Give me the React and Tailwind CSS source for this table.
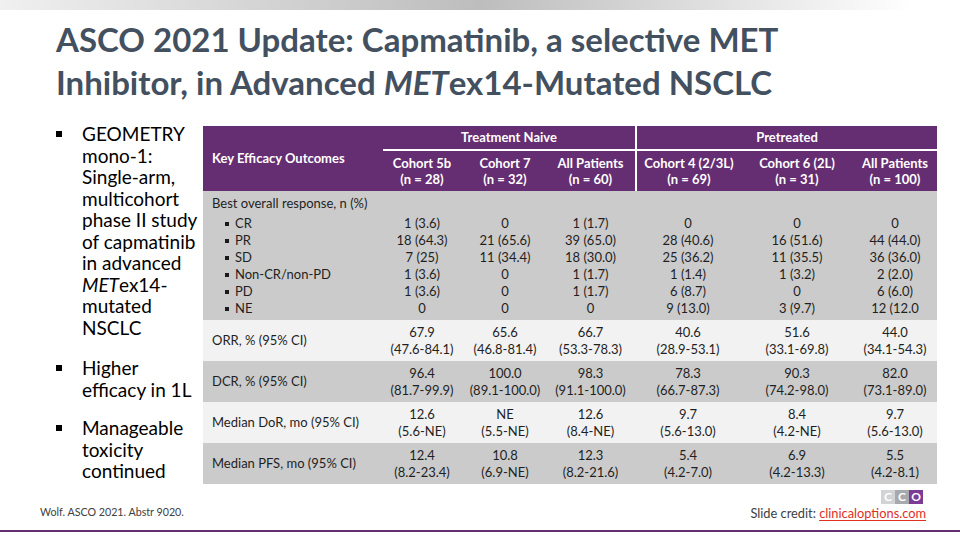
const W = ['w-[177px]', 'w-[84px]', 'w-[82px]', 'w-[89px]', 'w-[106px]', 'w-[112px]', 'w-[84px]'];

const bor = [
  ['CR', '1 (3.6)', '0', '1 (1.7)', '0', '0', '0'],
  ['PR', '18 (64.3)', '21 (65.6)', '39 (65.0)', '28 (40.6)', '16 (51.6)', '44 (44.0)'],
  ['SD', '7 (25)', '11 (34.4)', '18 (30.0)', '25 (36.2)', '11 (35.5)', '36 (36.0)'],
  ['Non-CR/non-PD', '1 (3.6)', '0', '1 (1.7)', '1 (1.4)', '1 (3.2)', '2 (2.0)'],
  ['PD', '1 (3.6)', '0', '1 (1.7)', '6 (8.7)', '0', '6 (6.0)'],
  ['NE', '0', '0', '0', '9 (13.0)', '3 (9.7)', '12 (12.0'],
];

const stats = [
  {
    label: 'ORR, % (95% CI)',
    bg: 'bg-[#f2f2f2]',
    vals: [['67.9', '(47.6-84.1)'], ['65.6', '(46.8-81.4)'], ['66.7', '(53.3-78.3)'], ['40.6', '(28.9-53.1)'], ['51.6', '(33.1-69.8)'], ['44.0', '(34.1-54.3)']],
  },
  {
    label: 'DCR, % (95% CI)',
    bg: 'bg-[#cbcbcb]',
    vals: [['96.4', '(81.7-99.9)'], ['100.0', '(89.1-100.0)'], ['98.3', '(91.1-100.0)'], ['78.3', '(66.7-87.3)'], ['90.3', '(74.2-98.0)'], ['82.0', '(73.1-89.0)']],
  },
  {
    label: 'Median DoR, mo (95% CI)',
    bg: 'bg-[#f2f2f2]',
    vals: [['12.6', '(5.6-NE)'], ['NE', '(5.5-NE)'], ['12.6', '(8.4-NE)'], ['9.7', '(5.6-13.0)'], ['8.4', '(4.2-NE)'], ['9.7', '(5.6-13.0)']],
  },
  {
    label: 'Median PFS, mo (95% CI)',
    bg: 'bg-[#cbcbcb]',
    vals: [['12.4', '(8.2-23.4)'], ['10.8', '(6.9-NE)'], ['12.3', '(8.2-21.6)'], ['5.4', '(4.2-7.0)'], ['6.9', '(4.2-13.3)'], ['5.5', '(4.2-8.1)']],
  },
];

const Bullet = ({ lines, className = '' }) => (
  <div className={"flex " + className}>
    <div className="w-[26px] shrink-0 pt-[8px]">
      <div className="w-[6px] h-[6px] bg-black" />
    </div>
    <div>
      {lines.map((l, i) => (
        <div key={i} className="whitespace-nowrap">{l}</div>
      ))}
    </div>
  </div>
);

const HeadCell = ({ w, top, bottom }) => (
  <div className={w + " flex flex-col items-center justify-center leading-[16px] whitespace-nowrap"}>
    <div>{top}</div>
    <div>{bottom}</div>
  </div>
);

const Table = () => {
  return (
    <div className="w-[734px] shrink-0 mt-[3px] text-[13px] text-[#1f1f1f]">

      {/* header */}
      <div className="flex h-[65px] bg-[#652d72] text-white font-bold">
        <div className="w-[177px] flex items-center pl-[9px]">Key Efficacy Outcomes</div>

        <div className="w-[255px] flex flex-col">
          <div className="h-[23px] flex items-center justify-center pl-[3px]">Treatment Naive</div>
          <div className="h-[2px] bg-white ml-[3px]" />
          <div className="flex h-[40px]">
            <HeadCell w="w-[84px]" top="Cohort 5b" bottom="(n = 28)" />
            <HeadCell w="w-[82px]" top="Cohort 7" bottom="(n = 32)" />
            <HeadCell w="w-[89px]" top="All Patients" bottom="(n = 60)" />
          </div>
        </div>

        <div className="w-[2px] bg-white" />

        <div className="w-[300px] flex flex-col">
          <div className="h-[23px] flex items-center justify-center">Pretreated</div>
          <div className="h-[2px] bg-white" />
          <div className="flex h-[40px]">
            <HeadCell w="w-[104px]" top="Cohort 4 (2/3L)" bottom="(n = 69)" />
            <HeadCell w="w-[112px]" top="Cohort 6 (2L)" bottom="(n = 31)" />
            <HeadCell w="w-[84px]" top="All Patients" bottom="(n = 100)" />
          </div>
        </div>
      </div>

      {/* best overall response */}
      <div className="h-[129px] bg-[#cbcbcb] pt-[4px] leading-[17px]">
        <div className="pl-[9px]">Best overall response, n (%)</div>
        <div className="mt-[3px]">
          {bor.map((r) => (
            <div key={r[0]} className="flex">
              <div className={W[0] + " flex items-center pl-[22px]"}>
                <div className="w-[4px] h-[4px] bg-[#1a1a1a] mr-[6px]" />
                <span>{r[0]}</span>
              </div>
              {r.slice(1).map((v, i) => (
                <div key={i} className={W[i + 1] + " text-center whitespace-nowrap"}>{v}</div>
              ))}
            </div>
          ))}
        </div>
      </div>

      {/* stat rows */}
      {stats.map((s) => (
        <div key={s.label} className={"flex h-[41px] leading-[17px] " + s.bg}>
          <div className={W[0] + " flex items-center pl-[9px]"}>{s.label}</div>
          {s.vals.map((v, i) => (
            <div key={i} className={W[i + 1] + " flex flex-col items-center justify-center whitespace-nowrap"}>
              <div>{v[0]}</div>
              <div>{v[1]}</div>
            </div>
          ))}
        </div>
      ))}
    </div>
  );
};

const Logo = () => (
  <div className="flex mr-[3px] text-white font-bold text-[12px] leading-[14px]">
    <div className="w-[14px] h-[14px] bg-[#d1d3d4] flex items-center justify-center">C</div>
    <div className="w-[14px] h-[14px] bg-[#a7a9ac] flex items-center justify-center">C</div>
    <div className="w-[14px] h-[14px] bg-[#7b3b96] flex items-center justify-center">O</div>
  </div>
);

export default function App() {
  return (
    <div className="w-[960px] h-[540px] bg-white overflow-hidden flex flex-col font-['Lato',sans-serif]">

      <div className="h-[10px] bg-linear-to-r from-[#f0f0f0] via-[#bdbdbd] to-white to-95%" />

      <h1 className="mt-[8px] pl-[56px] text-[33px] leading-[43px] font-bold text-[#435060]">
        ASCO 2021 Update: Capmatinib, a selective MET<br />
        Inhibitor, in Advanced <i>MET</i>ex14-Mutated NSCLC
      </h1>

      <div className="flex mt-[19px]">
        <div className="w-[203px] shrink-0 pl-[56px] text-[19px] leading-[21.5px] text-black">
          <Bullet lines={['GEOMETRY', 'mono-1:', 'Single-arm,', 'multicohort', 'phase II study', 'of capmatinib', 'in advanced', <span><i>MET</i>ex14-</span>, 'mutated', 'NSCLC']} />
          <Bullet className="mt-[19px]" lines={['Higher', 'efficacy in 1L']} />
          <Bullet className="mt-[17px]" lines={['Manageable', 'toxicity', 'continued']} />
        </div>
        <Table />
      </div>

      <div className="flex justify-between items-end pl-[40px] pr-[34px] mt-auto">
        <div className="text-[10.7px] leading-[14px] text-[#404040] mb-[2px]">Wolf. ASCO 2021. Abstr 9020.</div>
        <div className="flex flex-col items-end">
          <Logo />
          <div className="text-[12.8px] leading-[16px] text-[#404040] mt-[1px]">
            Slide credit:{' '}
            <span className="text-[#e0301e] underline decoration-[#e0301e] underline-offset-2">clinicaloptions.com</span>
          </div>
        </div>
      </div>

      <div className="h-[2px] bg-[#652d72] mt-[9px] mb-[8px]" />
    </div>
  );
}
